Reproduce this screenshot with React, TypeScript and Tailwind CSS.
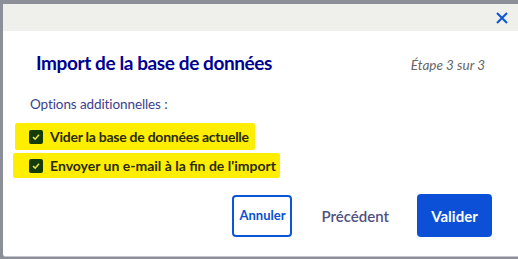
export default function App() {
  const font = { fontFamily: "Lato, 'Noto Sans', sans-serif" };
  return (
    <div className="w-[518px] h-[259px] bg-[#8d8f98] pt-[4px] pl-[3px] overflow-hidden" style={font}>
      <div className="w-[515px] h-[253px] bg-white flex flex-col rounded-bl-[3px] border-b border-[#c4c4ca]">
        <div className="h-[27px] shrink-0 bg-[#efefeb] flex justify-end items-start pr-[10px] pt-[8px]">
          <svg width="12" height="12" viewBox="0 0 12 12">
            <path d="M1 1L11 11M11 1L1 11" stroke="#0a55d8" strokeWidth="2" />
          </svg>
        </div>
        <div className="flex items-baseline justify-between pl-[33px] pr-[33px] mt-[20px]">
          <h1 className="text-[19px] leading-[24px] font-bold tracking-[-0.4px] text-[#000091] whitespace-nowrap">Import de la base de données</h1>
          <span className="text-[13.5px] italic text-[#666666] whitespace-nowrap">Étape 3 sur 3</span>
        </div>
        <div className="pl-[27px] mt-[20px] text-[13.5px] leading-[18px] tracking-[-0.1px] text-[#3c3f8c] whitespace-nowrap">Options additionnelles :</div>
        <div className="flex flex-col mt-[10px] gap-[3px]">
          <div className="ml-[12px] w-[240px] h-[27px] bg-[#ffee00] flex items-center pl-[14px] gap-[7px] rounded-[2px]">
            <span className="w-[14px] h-[14px] shrink-0 rounded-[2px] bg-[#143c0a] flex items-center justify-center">
              <svg width="10" height="10" viewBox="0 0 10 10">
                <path d="M2 5.2L4.2 7.2L8 2.8" stroke="#e6dd55" strokeWidth="1.6" fill="none" />
              </svg>
            </span>
            <span className="text-[14px] font-bold tracking-[-0.25px] text-[#2a2a08] whitespace-nowrap">Vider la base de données actuelle</span>
          </div>
          <div className="ml-[10px] w-[267px] h-[25px] bg-[#ffee00] flex items-center pl-[16px] gap-[7px] rounded-[2px]">
            <span className="w-[14px] h-[14px] shrink-0 rounded-[2px] bg-[#143c0a] flex items-center justify-center">
              <svg width="10" height="10" viewBox="0 0 10 10">
                <path d="M2 5.2L4.2 7.2L8 2.8" stroke="#e6dd55" strokeWidth="1.6" fill="none" />
              </svg>
            </span>
            <span className="text-[14px] font-bold tracking-[0px] text-[#2a2a08] whitespace-nowrap">Envoyer un e-mail à la fin de l'import</span>
          </div>
        </div>
        <div className="flex justify-end items-center pr-[26px] mt-[16px]">
          <button className="w-[60px] h-[42px] rounded-[4px] border-2 border-[#0a55d8] text-[13px] font-bold text-[#0a4fd0] bg-white">Annuler</button>
          <button className="ml-[15px] h-[42px] px-[14px] text-[15px] font-semibold text-[#4f5080]">Précédent</button>
          <button className="ml-[14px] w-[75px] h-[43px] rounded-[4px] bg-[#0b50d6] text-[15px] font-bold text-white">Valider</button>
        </div>
      </div>
    </div>
  );
}
